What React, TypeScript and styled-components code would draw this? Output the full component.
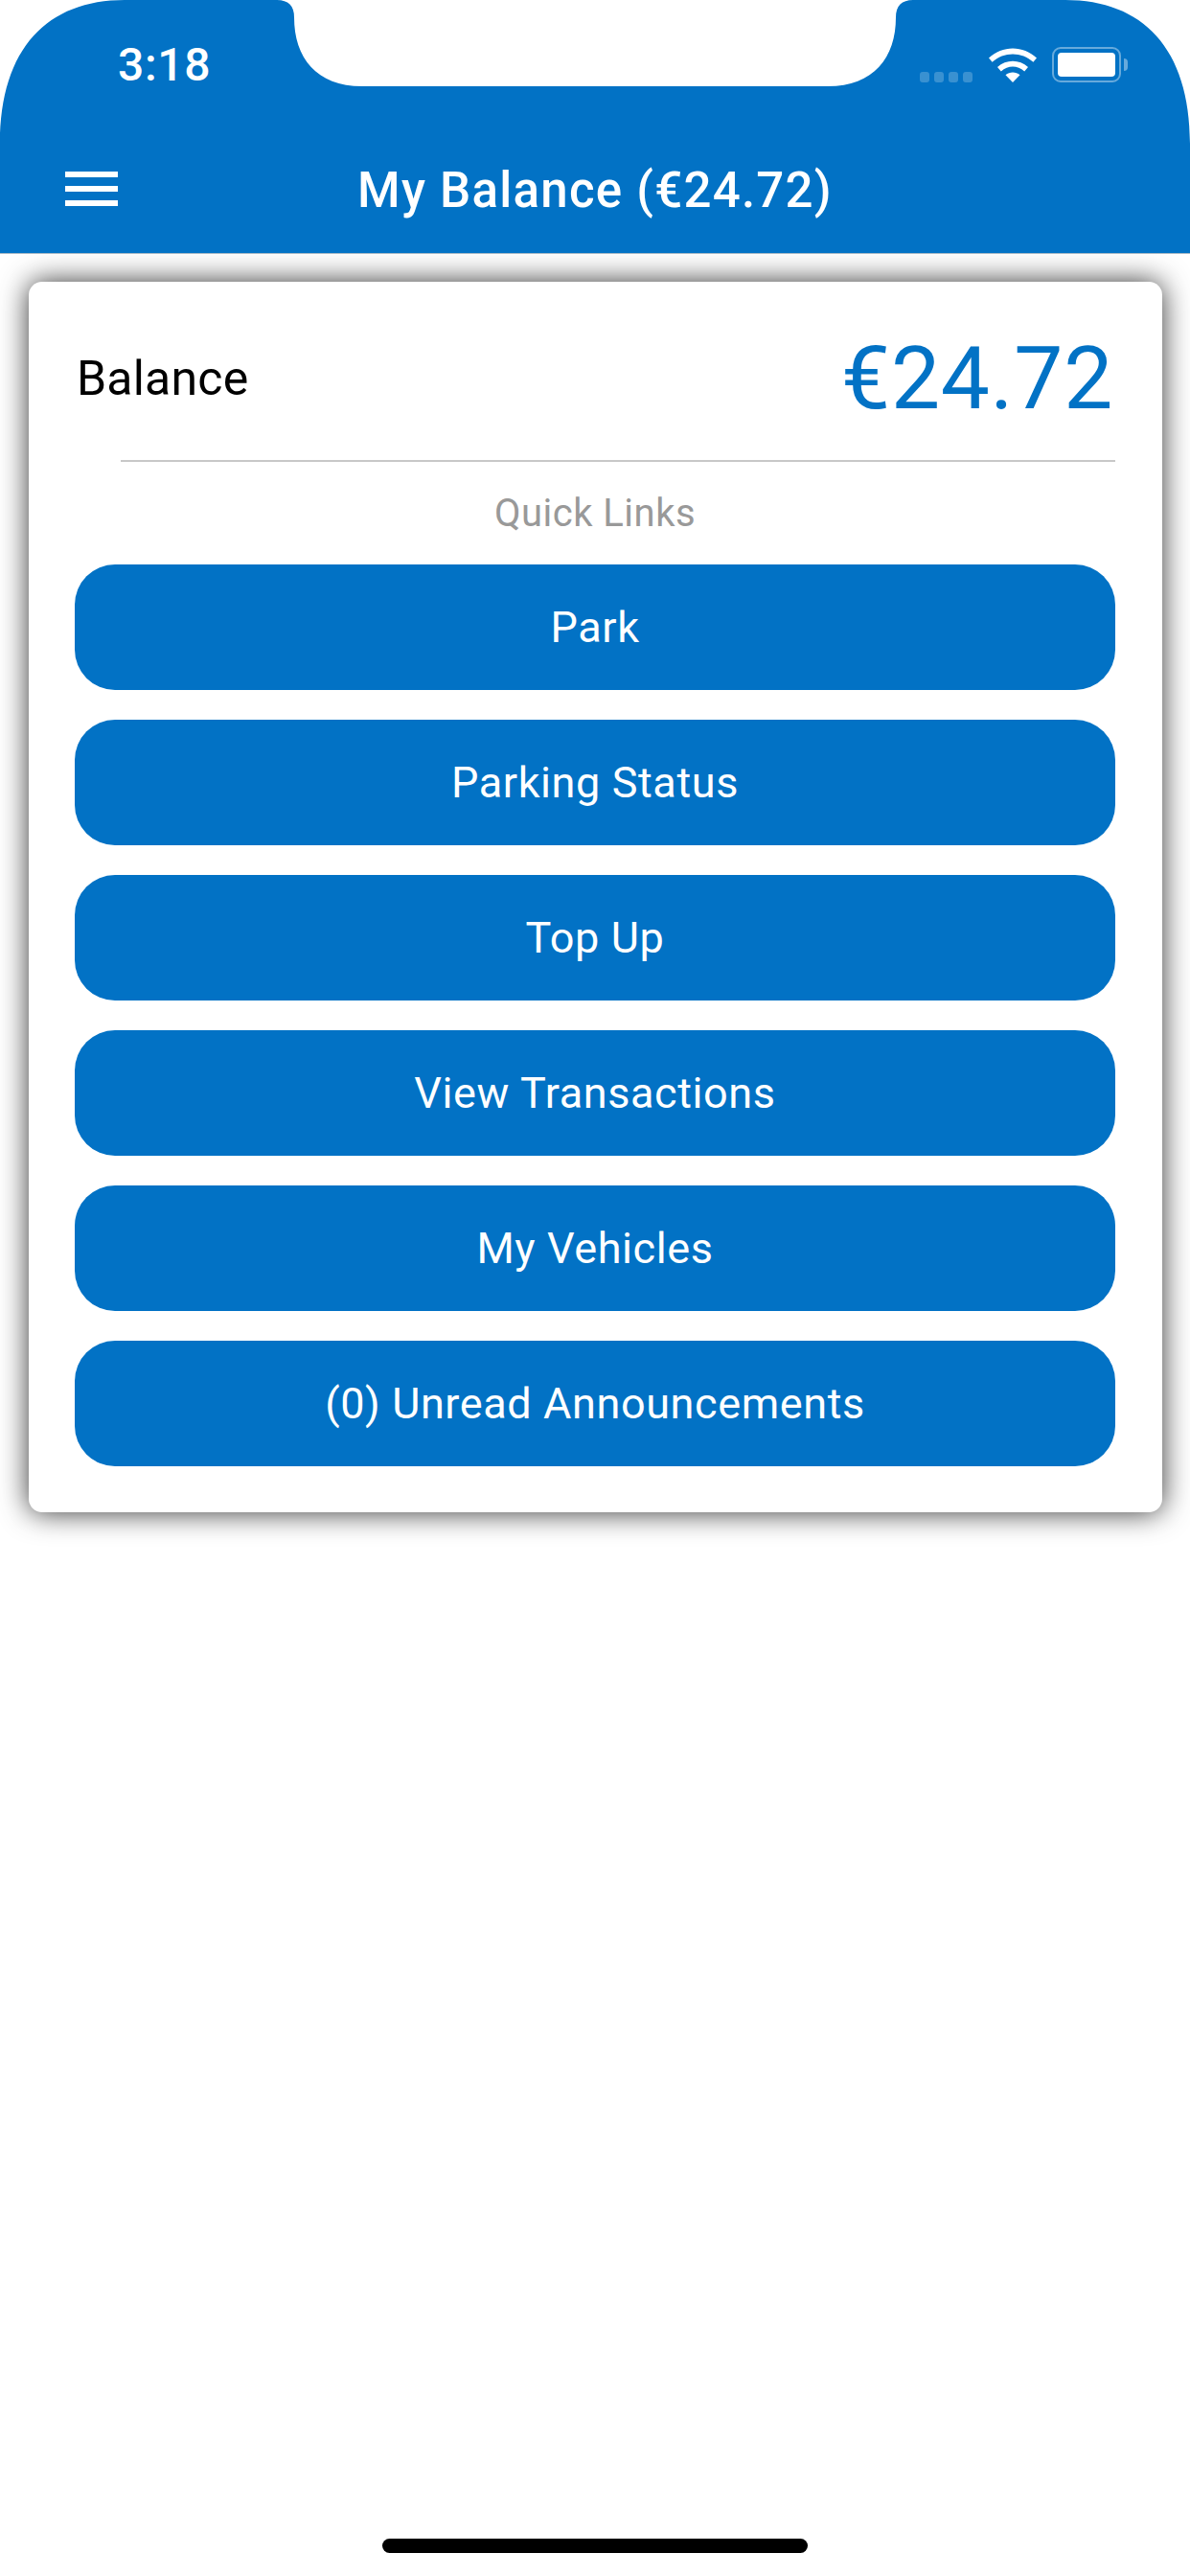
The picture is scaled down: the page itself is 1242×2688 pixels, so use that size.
import styled, { createGlobalStyle } from "styled-components";

const BLUE = "#0272c5";

const GlobalStyle = createGlobalStyle`
  html, body {
    margin: 0;
    padding: 0;
    background: #fff;
  }
  body {
    font-family: Roboto, "Noto Sans", sans-serif;
  }
`;

const links = [
  "Park",
  "Parking Status",
  "Top Up",
  "View Transactions",
  "My Vehicles",
  "(0) Unread Announcements",
];

const App = () => {
  return (
    <>
      <GlobalStyle />
      <Page>
        <Header>
          <StatusBar>
            <Time>3:18</Time>
            <StatusIcons>
              <Signal>
                <SignalDot />
                <SignalDot />
                <SignalDot />
                <SignalDot />
              </Signal>
              <svg width="50" height="37" viewBox="0 0 50 37" fill="#fff">
                <path d="M0 14.5 C14 1 36 1 50 14.5 L46.4 18.8 C34.5 7.6 15.5 7.6 3.6 18.8 Z" transform="translate(0 -3)" />
                <path d="M9 22 C18 13.6 32 13.6 41 22 L37.2 26.4 C29.8 20 20.2 20 12.8 26.4 Z" transform="translate(0 -1)" />
                <path d="M17.5 29.3 C21.8 25.6 28.2 25.6 32.5 29.3 L25 37 Z" />
              </svg>
              <Battery>
                <BatteryBody>
                  <BatteryFill />
                </BatteryBody>
                <BatteryNub />
              </Battery>
            </StatusIcons>
          </StatusBar>
          <NavBar>
            <MenuButton>
              <MenuLine />
              <MenuLine />
              <MenuLine />
            </MenuButton>
            <Title>My Balance (€24.72)</Title>
          </NavBar>
          <ScreenMask width="1242" height="160" viewBox="0 0 1242 160">
            <path fill="#fff" d="M0 0 L130 0 C50 0 0 50 0 150 Z" />
            <path fill="#fff" d="M1242 0 L1112 0 C1192 0 1242 50 1242 150 Z" />
            <path
              fill="#fff"
              d="M289 0 Q307 0 307 18 C307 60 330 90 378 90 L864 90 C912 90 935 60 935 18 Q935 0 953 0 Z"
            />
          </ScreenMask>
        </Header>

        <Card>
          <BalanceRow>
            <BalanceLabel>Balance</BalanceLabel>
            <BalanceAmount>€24.72</BalanceAmount>
          </BalanceRow>
          <Divider />
          <SectionLabel>Quick Links</SectionLabel>
          <LinkList>
            {links.map((link) => (
              <LinkButton key={link}>{link}</LinkButton>
            ))}
          </LinkList>
        </Card>

        <HomeBar>
          <HomeIndicator />
        </HomeBar>
      </Page>
    </>
  );
};

const Page = styled.div`
  display: flex;
  flex-direction: column;
  width: 1242px;
  height: 2688px;
  background: #fff;
  overflow: hidden;
`;
const Header = styled.header`
  position: relative;
  box-sizing: border-box;
  flex: none;
  height: 265px;
  background: ${BLUE};
  border-bottom: 1px solid #a9b9c6;
`;
const ScreenMask = styled.svg`
  position: absolute;
  top: 0;
  left: 0;
`;
const StatusBar = styled.div`
  display: flex;
  justify-content: space-between;
  align-items: flex-start;
  height: 132px;
  padding: 40px 65px 0 123px;
  box-sizing: border-box;
`;
const Time = styled.span`
  color: #fff;
  font-size: 48px;
  font-weight: 500;
  line-height: 56px;
  letter-spacing: 0.7px;
`;
const StatusIcons = styled.div`
  display: flex;
  align-items: flex-start;
  margin-top: 9px;
`;
const Signal = styled.div`
  display: flex;
  gap: 5px;
  margin: 26px 17px 0 0;
`;
const SignalDot = styled.i`
  width: 10px;
  height: 11px;
  border-radius: 3px;
  background: rgba(255, 255, 255, 0.22);
`;
const Battery = styled.div`
  display: flex;
  align-items: center;
  margin-left: 16px;
`;
const BatteryBody = styled.div`
  box-sizing: border-box;
  width: 72px;
  height: 37px;
  padding: 4px;
  border: 2px solid rgba(255, 255, 255, 0.4);
  border-radius: 9px;
`;
const BatteryFill = styled.div`
  height: 100%;
  background: #fff;
  border-radius: 4px;
`;
const BatteryNub = styled.div`
  width: 4px;
  height: 13px;
  margin-left: 3px;
  border-radius: 0 4px 4px 0;
  background: rgba(255, 255, 255, 0.4);
`;
const NavBar = styled.div`
  display: grid;
  grid-template-columns: 1fr auto 1fr;
  align-items: center;
  height: 132px;
  margin-top: -1px;
`;
const MenuButton = styled.div`
  display: flex;
  flex-direction: column;
  gap: 9px;
  width: 55px;
  margin-left: 68px;
`;
const MenuLine = styled.span`
  height: 6px;
  background: #fff;
`;
const Title = styled.h1`
  margin: 0;
  padding-top: 3px;
  color: #fff;
  font-size: 51px;
  font-weight: 500;
  letter-spacing: 1.25px;
`;
const Card = styled.section`
  box-sizing: border-box;
  flex: none;
  width: 1183px;
  margin: 29px 0 0 30px;
  padding: 0 49px 48px 48px;
  background: #fff;
  border-radius: 14px;
  box-shadow: 0 0 30px rgba(0, 0, 0, 0.8);
`;
const BalanceRow = styled.div`
  box-sizing: border-box;
  display: flex;
  justify-content: space-between;
  align-items: center;
  height: 186px;
  padding: 16px 2px 0 2px;
`;
const BalanceLabel = styled.span`
  color: #000;
  font-size: 50px;
  letter-spacing: 0.2px;
`;
const BalanceAmount = styled.span`
  color: ${BLUE};
  font-size: 91px;
  font-weight: 400;
  letter-spacing: 0.7px;
`;
const Divider = styled.hr`
  height: 2px;
  margin: 0 0 0 48px;
  border: 0;
  background: #c8c8c8;
`;
const SectionLabel = styled.div`
  display: flex;
  align-items: center;
  justify-content: center;
  height: 107px;
  color: #999;
  font-size: 40px;
  letter-spacing: 0.5px;
`;
const LinkList = styled.div`
  display: flex;
  flex-direction: column;
  gap: 31px;
`;
const LinkButton = styled.button`
  height: 131px;
  padding: 0;
  border: 0;
  border-radius: 42px;
  background: ${BLUE};
  color: #fff;
  font-family: inherit;
  font-size: 45px;
  letter-spacing: 0.6px;
`;
const HomeBar = styled.footer`
  display: flex;
  justify-content: center;
  margin-top: auto;
  padding-bottom: 24px;
`;
const HomeIndicator = styled.div`
  width: 444px;
  height: 15px;
  border-radius: 8px;
  background: #000;
`;

export default App;
